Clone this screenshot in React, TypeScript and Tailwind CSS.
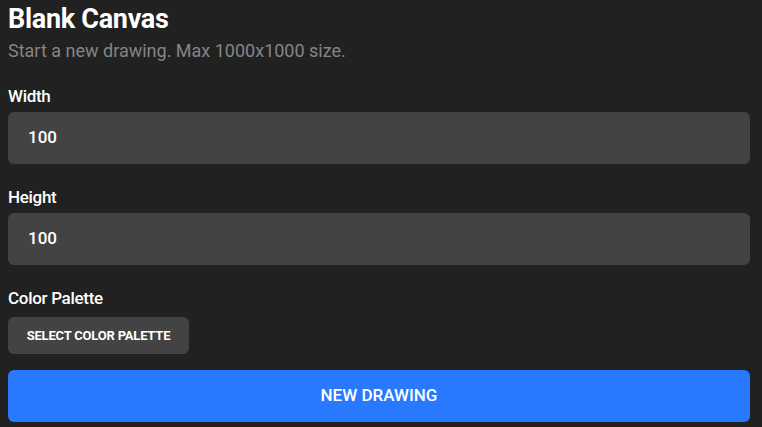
export default function App() {
  return (
    <div
      className="min-h-[427px] w-full bg-[#212121] pl-2 pr-3 pt-[5px] text-white"
      style={{ fontFamily: "Roboto, 'Liberation Sans', sans-serif" }}
    >
      <h1 className="text-[27px] font-bold leading-[28px] tracking-[-0.3px]">Blank Canvas</h1>
      <p className="mt-[6px] text-[18px] leading-[24px] text-[#858585]">
        Start a new drawing. Max 1000x1000 size.
      </p>

      <label className="mt-[23px] block text-[17px] font-medium leading-[20px] tracking-[-0.3px]">Width</label>
      <div className="mt-[6px] flex h-[52px] w-full items-center rounded-md bg-[#434343] px-5 text-[17px] font-medium">
        100
      </div>

      <label className="mt-[23px] block text-[17px] font-medium leading-[20px] tracking-[-0.3px]">Height</label>
      <div className="mt-[6px] flex h-[52px] w-full items-center rounded-md bg-[#434343] px-5 text-[17px] font-medium">
        100
      </div>

      <label className="mt-[23px] block text-[17px] font-medium leading-[20px] tracking-[-0.3px]">Color Palette</label>
      <button className="mt-[9px] flex h-[37px] w-[181px] items-center justify-center rounded-md bg-[#434343] text-[13px] font-bold uppercase tracking-[-0.2px]">
        Select Color Palette
      </button>

      <button className="mt-[16px] flex h-[52px] w-full items-center justify-center rounded-md bg-[#2979ff] text-[17px] font-medium uppercase">
        New Drawing
      </button>
    </div>
  );
}
